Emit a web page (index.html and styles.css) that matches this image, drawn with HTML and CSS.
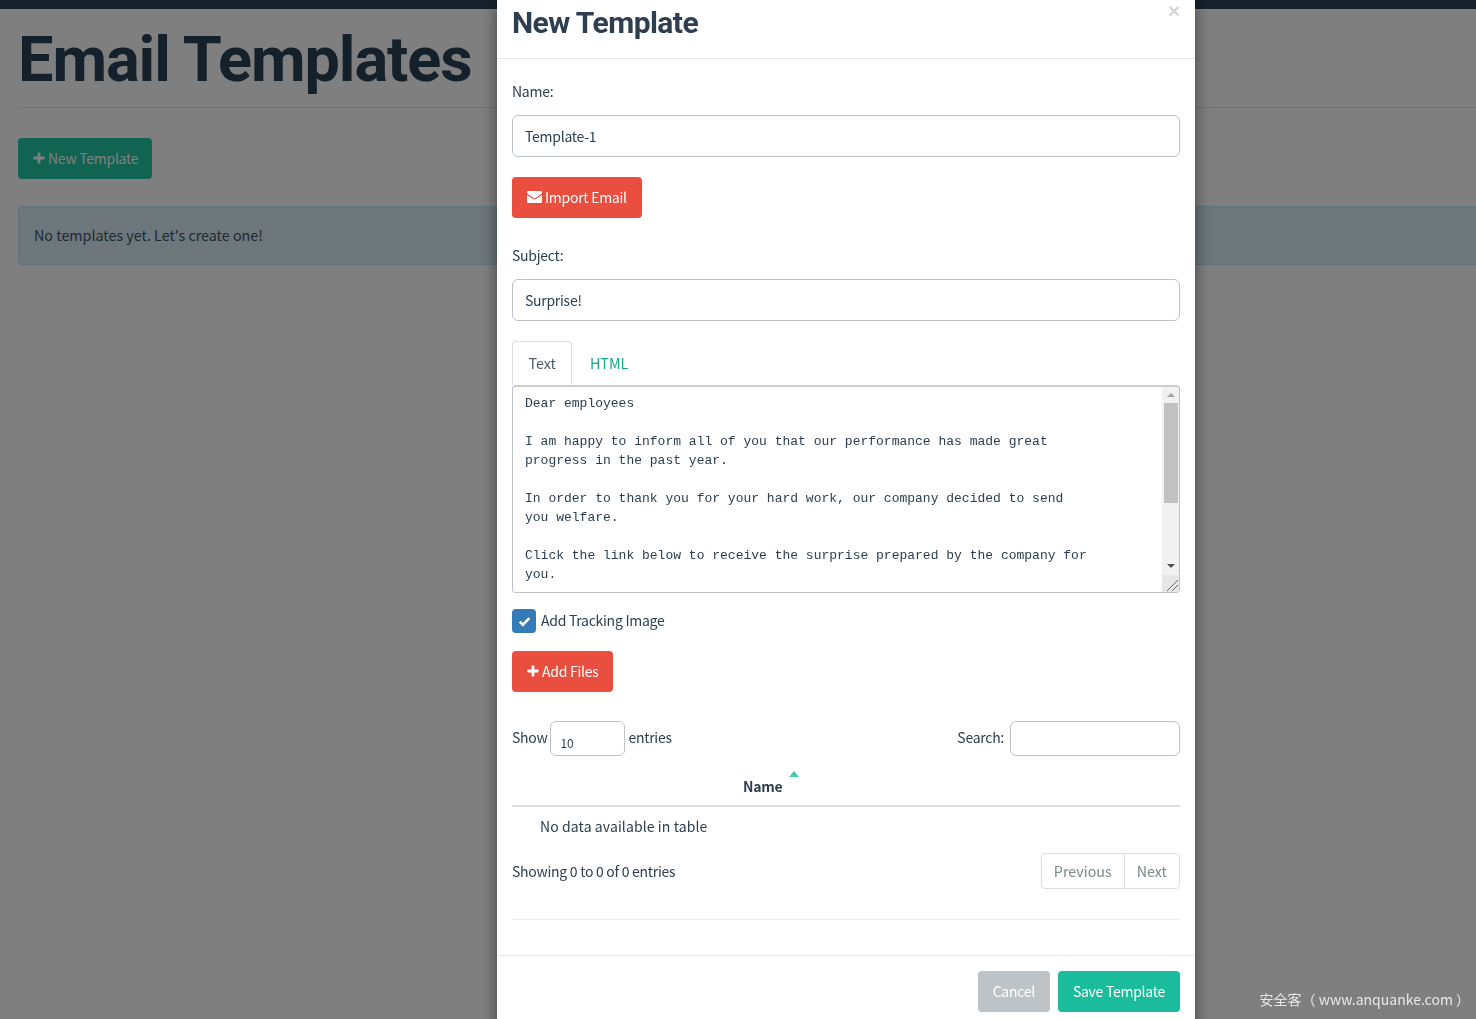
FILE: index.html

```html
<!DOCTYPE html>
<html lang="en">
<head>
  <meta charset="UTF-8">
  <meta name="viewport" content="width=device-width, initial-scale=1">
  <title>Email Templates</title>
  <link rel="stylesheet" href="styles.css">
</head>
<body>

<div class="navbar"></div>

<div class="page">
  <h1 class="page-title">Email Templates</h1>
  <button class="btn btn-green">
    <svg class="icon" viewBox="0 0 12 12"><path d="M4.6 1a.6.6 0 0 1 .6-.6h1.6a.6.6 0 0 1 .6.6v3.6H11a.6.6 0 0 1 .6.6v1.6a.6.6 0 0 1-.6.6H7.400v3.600a.6.6 0 0 1-.6.6H5.200a.6.6 0 0 1-.6-.6V7.400H1a.6.6 0 0 1-.6-.6V5.200a.6.6 0 0 1 .6-.6h3.600z"/></svg>New Template
  </button>
  <div class="alert">No templates yet. Let's create one!</div>
</div>

<div class="backdrop"></div>

<div class="modal-wrap">
  <div class="modal">
    <div class="modal-header">
      <h4 class="modal-title">New Template</h4>
      <span class="close">×</span>
    </div>

    <div class="modal-body">
      <label class="field-label">Name:</label>
      <input class="form-control" type="text" value="Template-1">

      <button class="btn btn-red btn-import">
        <svg class="icon icon-mail" viewBox="0 0 15 12"><path d="M1.300 0h12.400c.7 0 1.300.6 1.300 1.300 0 .8-.5 1.500-1.100 1.900L8.400 6.900c-.5.300-1.300.300-1.800 0L1.100 3.200C.5 2.800 0 2.100 0 1.500 0 .6.500 0 1.300 0zM0 4l6.100 4c.8.500 2 .500 2.800 0L15 4v6.700c0 .7-.6 1.300-1.300 1.300H1.300C.6 12 0 11.400 0 10.700z"/></svg>Import Email
      </button>

      <label class="field-label subject-label">Subject:</label>
      <input class="form-control" type="text" value="Surprise!">

      <ul class="tabs">
        <li class="tab active">Text</li>
        <li class="tab">HTML</li>
      </ul>

      <div class="editor">
        <textarea class="editor-text" readonly>Dear employees

I am happy to inform all of you that our performance has made great
progress in the past year.

In order to thank you for your hard work, our company decided to send
you welfare.

Click the link below to receive the surprise prepared by the company for
you.</textarea>
        <div class="scrollbar">
          <span class="arrow arrow-up"></span>
          <span class="thumb"></span>
          <span class="arrow arrow-down"></span>
          <span class="grip">
            <svg viewBox="0 0 17 17"><path d="M5 16 16 5M10 16l6-6" stroke="#666" fill="none"/></svg>
          </span>
        </div>
      </div>

      <div class="check-row">
        <span class="checkbox">
          <svg viewBox="0 0 14 12"><path d="M1.800 6.200 5.200 9.600 12.200 2.400" stroke="#fff" stroke-width="2.800" fill="none"/></svg>
        </span>
        <label>Add Tracking Image</label>
      </div>

      <button class="btn btn-red btn-files">
        <svg class="icon" viewBox="0 0 12 12"><path d="M4.6 1a.6.6 0 0 1 .6-.6h1.6a.6.6 0 0 1 .6.6v3.6H11a.6.6 0 0 1 .6.6v1.6a.6.6 0 0 1-.6.6H7.400v3.600a.6.6 0 0 1-.6.6H5.200a.6.6 0 0 1-.6-.6V7.400H1a.6.6 0 0 1-.6-.6V5.200a.6.6 0 0 1 .6-.6h3.600z"/></svg>Add Files
      </button>

      <div class="table-top">
        <div class="table-length">Show <select class="length-select"><option>10</option></select> entries</div>
        <div class="table-search">Search: <input class="search-input" type="text"></div>
      </div>

      <table class="data-table">
        <thead>
          <tr><th><span class="sort-name">Name<span class="sort-caret"></span></span></th></tr>
        </thead>
        <tbody>
          <tr><td>No data available in table</td></tr>
        </tbody>
      </table>

      <div class="table-bottom">
        <div class="table-info">Showing 0 to 0 of 0 entries</div>
        <div class="pagination">
          <a class="page-link">Previous</a>
          <a class="page-link">Next</a>
        </div>
      </div>

      <hr class="body-rule">
    </div>

    <div class="modal-footer">
      <button class="btn btn-grey">Cancel</button>
      <button class="btn btn-save">Save Template</button>
    </div>
  </div>
</div>

<div class="watermark">安全客（ www.anquanke.com ）</div>

</body>
</html>
```

FILE: styles.css

```css
* { box-sizing: border-box; }
html, body { height: 100%; }
body {
  margin: 0;
  overflow: hidden;
  background: #fff;
  color: #2c3e50;
  font-family: "Noto Sans CJK SC", "Liberation Sans", sans-serif;
  font-size: 14px;
  letter-spacing: -0.27px;
  line-height: 20px;
}
button, input, select, textarea { font-family: inherit; color: inherit; letter-spacing: inherit; }

.navbar { height: 9px; background: #2a4255; }
.page { padding: 0 0 0 18px; }
.page-title {
  margin: 0 0 30px;
  height: 99px;
  padding-top: 21px;
  border-bottom: 1px solid #e4e4e4;
  font-family: Roboto, sans-serif;
  font-size: 63px;
  font-weight: 700;
  line-height: 60px;
  color: #2a4255;
  letter-spacing: -1.05px;
}

.btn {
  display: inline-flex;
  align-items: center;
  height: 41px;
  padding: 0 15px 2px;
  border: 0;
  border-radius: 4px;
  color: #fff;
  font-size: 14px;
  cursor: pointer;
}
.btn-green { background: #20c9a2; padding-right: 14px; }
.btn-red { background: #ea4e3e; }
.btn-grey { background: #bdc3c7; }
.btn-save { background: #1abc9c; }
.icon { width: 12px; height: 12px; margin-right: 3px; fill: #fff; }
.icon-mail { width: 15px; height: 12px; }

.alert {
  margin-top: 27px;
  height: 59px;
  padding: 0 15px 2px;
  display: flex;
  align-items: center;
  background: #d9edf7;
  border: 1px solid #bce8f1;
  border-right: 0;
  border-radius: 4px 0 0 4px;
  color: #3c5566;
  font-size: 14.300px;
  letter-spacing: 0;
}

.backdrop { position: fixed; inset: 0; background: rgba(0, 0, 0, 0.5); }

.modal-wrap { position: fixed; inset: 0; padding-left: 497px; overflow: hidden; }
.modal {
  width: 698px;
  min-height: 1040px;
  background: #fff;
  box-shadow: 0 5px 15px rgba(0, 0, 0, 0.5);
}
.modal-header {
  position: relative;
  height: 59px;
  padding: 5px 15px 0;
  border-bottom: 1px solid #e5e5e5;
}
.modal-title {
  margin: 0;
  font-family: Roboto, sans-serif;
  font-size: 30px;
  font-weight: 700;
  line-height: 36px;
  letter-spacing: -0.55px;
}
.close {
  position: absolute;
  top: 0;
  right: 15px;
  font-family: "Liberation Sans", sans-serif;
  font-size: 21px;
  font-weight: 700;
  line-height: 21px;
  color: #d5d5d5;
}

.modal-body { padding: 22px 15px 0; height: 896px; }
.field-label { display: block; margin-bottom: 13px; height: 21px; }
.subject-label { margin-top: 26px; margin-bottom: 13px; height: 22px; padding-top: 1px; }
.form-control {
  display: block;
  width: 100%;
  height: 42px;
  padding: 0 12px;
  border: 1px solid #bdc3c7;
  border-radius: 6px;
  font-size: 14px;
  outline: none;
}
.btn-import { margin-top: 20px; display: flex; }
.btn-files { margin-top: 18px; display: flex; }

.tabs {
  display: flex;
  margin: 20px 0 0;
  padding: 0;
  list-style: none;
  height: 44px;
}
.tab {
  padding: 0 15.500px;
  line-height: 42px;
  font-size: 14.300px;
  letter-spacing: 0;
  margin-right: 1px;
  color: #18a689;
  border: 1px solid transparent;
  border-bottom: 0;
  border-radius: 4px 4px 0 0;
}
.tab.active { color: #4d5b68; border-color: #ddd; background: #fff; }

.editor {
  display: flex;
  height: 208px;
  border: 1px solid #bdc3c7;
  border-top: 2px solid #ccc;
  border-radius: 4px;
  overflow: hidden;
}
.editor-text {
  flex: 1;
  padding: 7px 12px;
  border: 0;
  outline: none;
  resize: none;
  overflow: hidden;
  font-family: "Liberation Mono", monospace;
  font-size: 13px;
  letter-spacing: 0;
  line-height: 19px;
  white-space: pre;
}
.scrollbar {
  width: 17px;
  display: flex;
  flex-direction: column;
  align-items: center;
  background: #f1f1f1;
}
.arrow { width: 0; height: 0; border-left: 4px solid transparent; border-right: 4px solid transparent; }
.arrow-up { margin-top: 6px; border-bottom: 4px solid #a3a3a3; }
.thumb { width: 14px; height: 100px; margin-top: 6px; background: #c1c1c1; }
.arrow-down { margin-top: 61px; border-top: 4px solid #505050; }
.grip { width: 17px; height: 17px; margin-top: auto; background: #e6e6e6; }
.grip svg { display: block; width: 17px; height: 17px; }

.check-row { display: flex; align-items: center; gap: 5px; margin-top: 16px; height: 24px; }
.check-row label { margin-top: -3px; }
.checkbox {
  width: 24px;
  height: 24px;
  display: flex;
  align-items: center;
  justify-content: center;
  background: #337ab7;
  border-radius: 4px;
}
.checkbox svg { width: 13px; height: 11px; }

.table-top { display: flex; justify-content: space-between; margin-top: 29px; height: 35px; }
.table-length, .table-search { display: flex; align-items: center; gap: 3px; height: 31px; }
.table-search { gap: 6px; }
.length-select {
  width: 75px;
  height: 35px;
  padding: 8px 9px 0;
  border: 1px solid #bdc3c7;
  border-radius: 6px;
  background: #fff;
  font-size: 12px;
  letter-spacing: 0;
  appearance: none;
  outline: none;
  margin-top: 4px;
}
.search-input { width: 170px; height: 35px; border: 1px solid #bdc3c7; border-radius: 6px; outline: none; margin-top: 4px; }

.data-table { width: 100%; border-collapse: collapse; margin-top: 2px; }
.data-table th {
  height: 48px;
  padding: 0 0 9px 231px;
  vertical-align: bottom;
  text-align: left;
  border-bottom: 2px solid #ddd;
  font-weight: 700;
}
.sort-name { position: relative; display: inline-block; }
.sort-caret {
  position: absolute;
  left: 46px;
  top: -5px;
  width: 0;
  height: 0;
  border-left: 5.500px solid transparent;
  border-right: 5.500px solid transparent;
  border-bottom: 6px solid #46c9ae;
}
.data-table td { height: 41px; padding: 0 28px 2px; letter-spacing: 0.1px; }

.table-bottom { display: flex; justify-content: space-between; align-items: center; margin-top: 6px; height: 36px; }
.pagination { display: flex; height: 36px; border: 1px solid #ddd; border-radius: 4px; color: #7b8a8b; }
.page-link { padding: 0 12px; line-height: 34px; font-size: 14.300px; letter-spacing: 0; }
.page-link + .page-link { border-left: 1px solid #ddd; }

.body-rule { margin: 30px 0 0; border: 0; border-top: 1px solid #eee; }

.modal-footer {
  display: flex;
  justify-content: flex-end;
  gap: 8px;
  padding: 15px;
  border-top: 1px solid #e5e5e5;
}

.watermark {
  position: fixed;
  right: 6px;
  bottom: 9px;
  color: #e8e8e8;
  font-size: 14px;
  letter-spacing: 0;
  line-height: 21px;
}
```
